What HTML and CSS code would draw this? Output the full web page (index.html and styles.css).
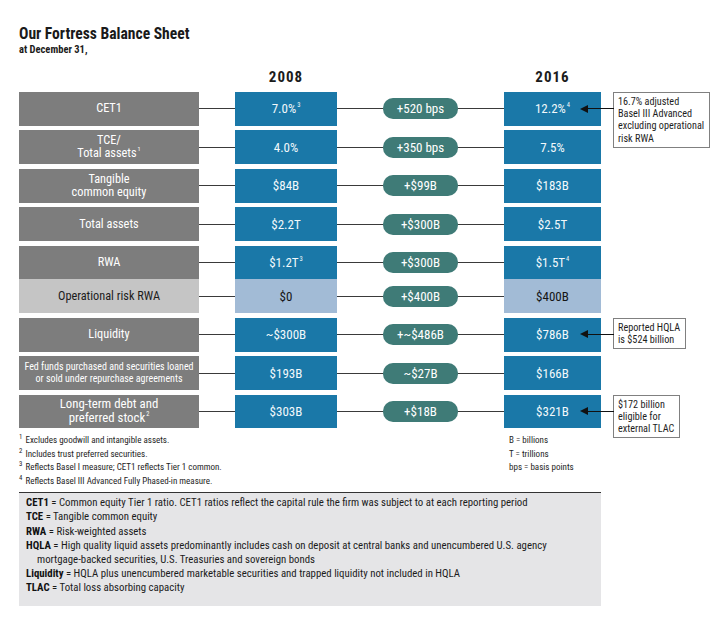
FILE: index.html
```html
<!DOCTYPE html>
<html lang="en">
<head>
<meta charset="utf-8">
<title>Our Fortress Balance Sheet</title>
<link rel="stylesheet" href="styles.css">
</head>
<body>
<div class="page">
  <h1 class="title">Our Fortress Balance Sheet</h1>
  <div class="subtitle">at December 31,</div>

  <div class="grid head">
    <div class="year c08">2008</div>
    <div class="year c16">2016</div>
  </div>

  <div class="rows">
    <div class="grid row">
      <div class="label"><span>CET1</span></div>
      <div class="wire"></div>
      <div class="val"><span>7.0%<sup>3</sup></span></div>
      <div class="wire"></div>
      <div class="pill">+520 bps</div>
      <div class="wire"></div>
      <div class="val"><span>12.2%<sup>4</sup></span></div>
      <div class="gap"></div>
      <div class="note"><span class="arrow"></span>16.7% adjusted<br>Basel III Advanced<br>excluding operational<br>risk RWA</div>
    </div>

    <div class="grid row">
      <div class="label"><span>TCE/<br>Total assets<sup>1</sup></span></div>
      <div class="wire"></div>
      <div class="val"><span>4.0%</span></div>
      <div class="wire"></div>
      <div class="pill">+350 bps</div>
      <div class="wire"></div>
      <div class="val"><span>7.5%</span></div>
    </div>

    <div class="grid row">
      <div class="label"><span>Tangible<br>common equity</span></div>
      <div class="wire"></div>
      <div class="val"><span>$84B</span></div>
      <div class="wire"></div>
      <div class="pill">+$99B</div>
      <div class="wire"></div>
      <div class="val"><span>$183B</span></div>
    </div>

    <div class="grid row">
      <div class="label"><span>Total assets</span></div>
      <div class="wire"></div>
      <div class="val"><span>$2.2T</span></div>
      <div class="wire"></div>
      <div class="pill">+$300B</div>
      <div class="wire"></div>
      <div class="val"><span>$2.5T</span></div>
    </div>

    <div class="pair">
      <div class="grid row">
        <div class="label"><span>RWA</span></div>
        <div class="wire"></div>
        <div class="val"><span>$1.2T<sup>3</sup></span></div>
        <div class="wire"></div>
        <div class="pill">+$300B</div>
        <div class="wire"></div>
        <div class="val"><span>$1.5T<sup>4</sup></span></div>
      </div>
      <div class="grid row light">
        <div class="label"><span>Operational risk RWA</span></div>
        <div class="wire"></div>
        <div class="val"><span>$0</span></div>
        <div class="wire"></div>
        <div class="pill">+$400B</div>
        <div class="wire"></div>
        <div class="val"><span>$400B</span></div>
      </div>
    </div>

    <div class="grid row">
      <div class="label"><span>Liquidity</span></div>
      <div class="wire"></div>
      <div class="val"><span>~$300B</span></div>
      <div class="wire"></div>
      <div class="pill">+~$486B</div>
      <div class="wire"></div>
      <div class="val"><span>$786B</span></div>
      <div class="gap"></div>
      <div class="note"><span class="arrow"></span>Reported HQLA<br>is $524 billion</div>
    </div>

    <div class="grid row">
      <div class="label small"><span>Fed funds purchased and securities loaned<br>or sold under repurchase agreements</span></div>
      <div class="wire"></div>
      <div class="val"><span>$193B</span></div>
      <div class="wire"></div>
      <div class="pill">~$27B</div>
      <div class="wire"></div>
      <div class="val"><span>$166B</span></div>
    </div>

    <div class="grid row">
      <div class="label big"><span>Long-term debt and<br>preferred stock<sup>2</sup></span></div>
      <div class="wire"></div>
      <div class="val"><span>$303B</span></div>
      <div class="wire"></div>
      <div class="pill">+$18B</div>
      <div class="wire"></div>
      <div class="val"><span>$321B</span></div>
      <div class="gap"></div>
      <div class="note"><span class="arrow"></span>$172 billion<br>eligible for<br>external TLAC</div>
    </div>
  </div>

  <div class="foot">
    <div class="footnotes">
      <p><sup>1</sup> Excludes goodwill and intangible assets.</p>
      <p><sup>2</sup> Includes trust preferred securities.</p>
      <p><sup>3</sup> Reflects Basel I measure; CET1 reflects Tier 1 common.</p>
      <p><sup>4</sup> Reflects Basel III Advanced Fully Phased-in measure.</p>
    </div>
    <div class="units">
      <p>B = billions</p>
      <p>T = trillions</p>
      <p>bps = basis points</p>
    </div>
  </div>

  <div class="glossary">
    <p><b>CET1</b> = Common equity Tier 1 ratio. CET1 ratios reflect the capital rule the firm was subject to at each reporting period</p>
    <p><b>TCE</b> = Tangible common equity</p>
    <p><b>RWA</b> = Risk-weighted assets</p>
    <p><b>HQLA</b> = High quality liquid assets predominantly includes cash on deposit at central banks and unencumbered U.S. agency<br>mortgage-backed securities, U.S. Treasuries and sovereign bonds</p>
    <p><b>Liquidity</b> = HQLA plus unencumbered marketable securities and trapped liquidity not included in HQLA</p>
    <p><b>TLAC</b> = Total loss absorbing capacity</p>
  </div>
</div>
</body>
</html>
```

FILE: styles.css
```css
* { box-sizing: border-box; }

html, body {
  margin: 0;
  padding: 0;
  background: #ffffff;
}

body {
  font-family: "Roboto Condensed", "Open Sans", sans-serif;
  color: #1b1b1b;
}

.page {
  padding: 25px 0 0 19px;
  width: 720px;
}

.title {
  margin: 0;
  font-size: 15.6px;
  line-height: 18px;
  font-weight: bold;
  color: #1a1a1a;
}

.subtitle {
  margin-top: 1px;
  font-size: 10.5px;
  line-height: 11px;
  font-weight: bold;
}

.grid {
  display: grid;
  grid-template-columns: 180px 36px 102px 46px 75px 46px 97px 12px 95px;
}

.head {
  margin-top: 14px;
  height: 16px;
}

.year {
  font-size: 15px;
  line-height: 16px;
  font-weight: bold;
  letter-spacing: 1px;
  text-align: center;
}
.c08 { grid-column: 3; }
.c16 { grid-column: 7; }

.rows {
  margin-top: 7px;
  display: flex;
  flex-direction: column;
  gap: 4.6px;
}

.pair {
  display: flex;
  flex-direction: column;
}

.row {
  height: 33.8px;
  grid-template-rows: 33.8px;
}

.label {
  background: #7d7d7d;
  color: #ffffff;
  display: flex;
  align-items: center;
  justify-content: center;
  text-align: center;
  font-size: 12.3px;
  line-height: 13px;
}
.label.small {
  font-size: 10px;
  line-height: 12.3px;
}
.label.big {
  font-size: 12.8px;
  line-height: 14px;
}

.wire {
  align-self: center;
  height: 1px;
  background: #3a3a3a;
}

.val {
  background: #1a78a8;
  color: #f2f8fb;
  display: flex;
  align-items: center;
  justify-content: center;
  font-size: 13px;
}

.pill {
  align-self: center;
  height: 21px;
  border-radius: 10px;
  background: #3f7b77;
  color: #ffffff;
  display: flex;
  align-items: center;
  justify-content: center;
  font-size: 13px;
}

sup {
  font-size: 0.5em;
  line-height: 0;
  vertical-align: 0.95em;
  margin-left: 1px;
}

.light .label {
  background: #c5c5c5;
  color: #1c1c1c;
}
.light .val {
  background: #a2bbd6;
  color: #151515;
}

.note {
  grid-column: 9;
  align-self: start;
  justify-self: start;
  position: relative;
  border: 1px solid #808080;
  background: #ffffff;
  padding: 3px 5px 2px 4px;
  font-size: 10.2px;
  line-height: 12.2px;
  color: #1e1e1e;
  white-space: nowrap;
}

.arrow {
  position: absolute;
  right: 100%;
  top: 11.5px;
  width: 34px;
  height: 8px;
}
.arrow::before {
  content: "";
  position: absolute;
  left: 0;
  top: 0;
  border-style: solid;
  border-width: 4px 8px 4px 0;
  border-color: transparent #111111 transparent transparent;
}
.arrow::after {
  content: "";
  position: absolute;
  left: 6px;
  right: 0;
  top: 3.5px;
  height: 1px;
  background: #111111;
}

.foot {
  display: grid;
  grid-template-columns: 490px 1fr;
  margin-top: 6px;
}

.footnotes p,
.units p {
  margin: 0;
  font-size: 9px;
  line-height: 13.5px;
  color: #1e1e1e;
}
.footnotes sup {
  margin-left: 0;
  margin-right: 1px;
  font-size: 0.75em;
  vertical-align: 0.6em;
}

.glossary {
  margin-top: 4px;
  width: 582px;
  border-top: 1px solid #333333;
  background: #e5e5e7;
  padding: 3px 7px 11px 7px;
}
.glossary p {
  margin: 0;
  font-size: 10.8px;
  line-height: 14.1px;
  padding-left: 11px;
  text-indent: -11px;
  color: #1c1c1c;
}
.glossary b {
  color: #111111;
}
```
